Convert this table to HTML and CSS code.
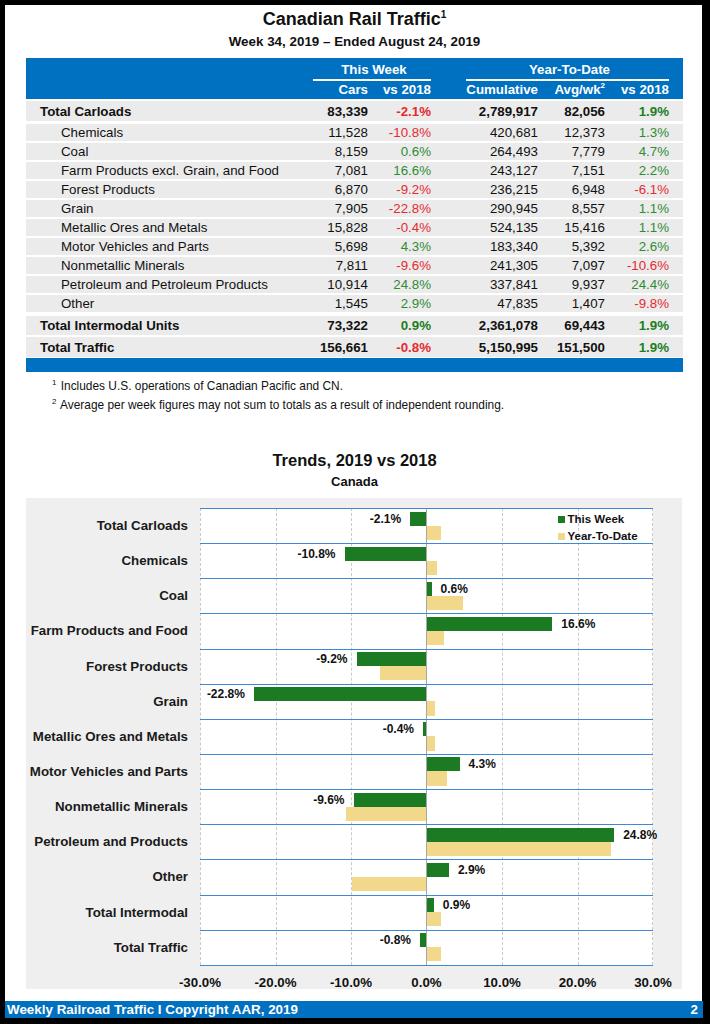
FILE: index.html
```html
<!DOCTYPE html>
<html>
<head>
<meta charset="utf-8">
<title>Canadian Rail Traffic</title>
<link rel="stylesheet" href="styles.css">
</head>
<body>
<div class="page">
  <h1 class="title">Canadian Rail Traffic<sup>1</sup></h1>
  <div class="subtitle">Week 34, 2019 – Ended August 24, 2019</div>

  <table class="traffic">
    <colgroup>
      <col class="c-label"><col class="c-cars"><col class="c-pct"><col class="c-gap"><col class="c-cum"><col class="c-avg"><col class="c-pct2"><col class="c-end">
    </colgroup>
    <thead>
      <tr class="h1">
        <td></td>
        <td colspan="2"><div class="grp grp-week">This Week</div></td>
        <td></td>
        <td colspan="3"><div class="grp grp-ytd">Year-To-Date</div></td>
        <td></td>
      </tr>
      <tr class="h2">
        <td></td>
        <td class="num">Cars</td>
        <td class="num">vs 2018</td>
        <td></td>
        <td class="num">Cumulative</td>
        <td class="num">Avg/wk<sup>2</sup></td>
        <td class="num">vs 2018</td>
        <td></td>
      </tr>
    </thead>
    <tbody>
      <tr class="total first"><td class="lbl">Total Carloads</td><td class="num">83,339</td><td class="num neg">-2.1%</td><td></td><td class="num">2,789,917</td><td class="num">82,056</td><td class="num pos">1.9%</td><td></td></tr>
      <tr class="sub first-sub"><td class="lbl">Chemicals</td><td class="num">11,528</td><td class="num neg">-10.8%</td><td></td><td class="num">420,681</td><td class="num">12,373</td><td class="num pos">1.3%</td><td></td></tr>
      <tr class="sub"><td class="lbl">Coal</td><td class="num">8,159</td><td class="num pos">0.6%</td><td></td><td class="num">264,493</td><td class="num">7,779</td><td class="num pos">4.7%</td><td></td></tr>
      <tr class="sub"><td class="lbl">Farm Products excl. Grain, and Food</td><td class="num">7,081</td><td class="num pos">16.6%</td><td></td><td class="num">243,127</td><td class="num">7,151</td><td class="num pos">2.2%</td><td></td></tr>
      <tr class="sub"><td class="lbl">Forest Products</td><td class="num">6,870</td><td class="num neg">-9.2%</td><td></td><td class="num">236,215</td><td class="num">6,948</td><td class="num neg">-6.1%</td><td></td></tr>
      <tr class="sub"><td class="lbl">Grain</td><td class="num">7,905</td><td class="num neg">-22.8%</td><td></td><td class="num">290,945</td><td class="num">8,557</td><td class="num pos">1.1%</td><td></td></tr>
      <tr class="sub"><td class="lbl">Metallic Ores and Metals</td><td class="num">15,828</td><td class="num neg">-0.4%</td><td></td><td class="num">524,135</td><td class="num">15,416</td><td class="num pos">1.1%</td><td></td></tr>
      <tr class="sub"><td class="lbl">Motor Vehicles and Parts</td><td class="num">5,698</td><td class="num pos">4.3%</td><td></td><td class="num">183,340</td><td class="num">5,392</td><td class="num pos">2.6%</td><td></td></tr>
      <tr class="sub"><td class="lbl">Nonmetallic Minerals</td><td class="num">7,811</td><td class="num neg">-9.6%</td><td></td><td class="num">241,305</td><td class="num">7,097</td><td class="num neg">-10.6%</td><td></td></tr>
      <tr class="sub"><td class="lbl">Petroleum and Petroleum Products</td><td class="num">10,914</td><td class="num pos">24.8%</td><td></td><td class="num">337,841</td><td class="num">9,937</td><td class="num pos">24.4%</td><td></td></tr>
      <tr class="sub"><td class="lbl">Other</td><td class="num">1,545</td><td class="num pos">2.9%</td><td></td><td class="num">47,835</td><td class="num">1,407</td><td class="num neg">-9.8%</td><td></td></tr>
      <tr class="total after-sub"><td class="lbl">Total Intermodal Units</td><td class="num">73,322</td><td class="num pos">0.9%</td><td></td><td class="num">2,361,078</td><td class="num">69,443</td><td class="num pos">1.9%</td><td></td></tr>
      <tr class="total last"><td class="lbl">Total Traffic</td><td class="num">156,661</td><td class="num neg">-0.8%</td><td></td><td class="num">5,150,995</td><td class="num">151,500</td><td class="num pos">1.9%</td><td></td></tr>
    </tbody>
    <tfoot>
      <tr><td colspan="8"></td></tr>
    </tfoot>
  </table>

  <div class="notes">
    <div><sup>1</sup> Includes U.S. operations of Canadian Pacific and CN.</div>
    <div><sup>2</sup> Average per week figures may not sum to totals as a result of independent rounding.</div>
  </div>

  <h2 class="chart-title">Trends, 2019 vs 2018</h2>
  <div class="chart-sub">Canada</div>

  <div class="chart">
    <div class="cats">
      <div>Total Carloads</div>
      <div>Chemicals</div>
      <div>Coal</div>
      <div>Farm Products and Food</div>
      <div>Forest Products</div>
      <div>Grain</div>
      <div>Metallic Ores and Metals</div>
      <div>Motor Vehicles and Parts</div>
      <div>Nonmetallic Minerals</div>
      <div>Petroleum and Products</div>
      <div>Other</div>
      <div>Total Intermodal</div>
      <div>Total Traffic</div>
    </div>
    <div class="plotcol">
      <div class="plot">
        <i class="vgrid" style="left:0px"></i>
        <i class="vgrid" style="left:75.5px"></i>
        <i class="vgrid" style="left:151px"></i>
        <i class="vgrid" style="left:302px"></i>
        <i class="vgrid" style="left:377.5px"></i>
        <i class="vgrid" style="left:452px"></i>

        <div class="row"><div class="nh"><div class="ln g"><span class="val">-2.1%</span><b class="bar gb" style="width:15.9px"></b></div><div class="ln y"></div></div><div class="ph"><div class="ln g"></div><div class="ln y"><b class="bar yb" style="width:14.3px"></b></div></div></div>
        <div class="row"><div class="nh"><div class="ln g"><span class="val">-10.8%</span><b class="bar gb" style="width:81.5px"></b></div><div class="ln y"></div></div><div class="ph"><div class="ln g"></div><div class="ln y"><b class="bar yb" style="width:9.8px"></b></div></div></div>
        <div class="row"><div class="nh"><div class="ln g"></div><div class="ln y"></div></div><div class="ph"><div class="ln g"><b class="bar gb" style="width:4.5px"></b><span class="val">0.6%</span></div><div class="ln y"><b class="bar yb" style="width:35.5px"></b></div></div></div>
        <div class="row"><div class="nh"><div class="ln g"></div><div class="ln y"></div></div><div class="ph"><div class="ln g"><b class="bar gb" style="width:125.3px"></b><span class="val">16.6%</span></div><div class="ln y"><b class="bar yb" style="width:16.6px"></b></div></div></div>
        <div class="row"><div class="nh"><div class="ln g"><span class="val">-9.2%</span><b class="bar gb" style="width:69.5px"></b></div><div class="ln y"><b class="bar yb" style="width:46.1px"></b></div></div><div class="ph"><div class="ln g"></div><div class="ln y"></div></div></div>
        <div class="row"><div class="nh"><div class="ln g"><span class="val">-22.8%</span><b class="bar gb" style="width:172.1px"></b></div><div class="ln y"></div></div><div class="ph"><div class="ln g"></div><div class="ln y"><b class="bar yb" style="width:8.3px"></b></div></div></div>
        <div class="row"><div class="nh"><div class="ln g"><span class="val">-0.4%</span><b class="bar gb" style="width:3px"></b></div><div class="ln y"></div></div><div class="ph"><div class="ln g"></div><div class="ln y"><b class="bar yb" style="width:8.3px"></b></div></div></div>
        <div class="row"><div class="nh"><div class="ln g"></div><div class="ln y"></div></div><div class="ph"><div class="ln g"><b class="bar gb" style="width:32.5px"></b><span class="val">4.3%</span></div><div class="ln y"><b class="bar yb" style="width:19.6px"></b></div></div></div>
        <div class="row"><div class="nh"><div class="ln g"><span class="val">-9.6%</span><b class="bar gb" style="width:72.5px"></b></div><div class="ln y"><b class="bar yb" style="width:80px"></b></div></div><div class="ph"><div class="ln g"></div><div class="ln y"></div></div></div>
        <div class="row"><div class="nh"><div class="ln g"></div><div class="ln y"></div></div><div class="ph"><div class="ln g"><b class="bar gb" style="width:187.2px"></b><span class="val">24.8%</span></div><div class="ln y"><b class="bar yb" style="width:184.2px"></b></div></div></div>
        <div class="row"><div class="nh"><div class="ln g"></div><div class="ln y"><b class="bar yb" style="width:74px"></b></div></div><div class="ph"><div class="ln g"><b class="bar gb" style="width:21.9px"></b><span class="val">2.9%</span></div><div class="ln y"></div></div></div>
        <div class="row"><div class="nh"><div class="ln g"></div><div class="ln y"></div></div><div class="ph"><div class="ln g"><b class="bar gb" style="width:6.8px"></b><span class="val">0.9%</span></div><div class="ln y"><b class="bar yb" style="width:14.3px"></b></div></div></div>
        <div class="row"><div class="nh"><div class="ln g"><span class="val">-0.8%</span><b class="bar gb" style="width:6px"></b></div><div class="ln y"></div></div><div class="ph"><div class="ln g"></div><div class="ln y"><b class="bar yb" style="width:14.3px"></b></div></div></div>

        <div class="legend">
          <div><span class="sw sw-g"></span>This Week</div>
          <div><span class="sw sw-y"></span>Year-To-Date</div>
        </div>
      </div>
      <div class="axis">
        <span>-30.0%</span><span>-20.0%</span><span>-10.0%</span><span>0.0%</span><span>10.0%</span><span>20.0%</span><span>30.0%</span>
      </div>
    </div>
  </div>
</div>
<div class="footer"><span>Weekly Railroad Traffic I Copyright AAR, 2019</span><span>2</span></div>
</body>
</html>
```
FILE: styles.css
```css
* { box-sizing: border-box; }
html, body { margin: 0; padding: 0; }
body {
  background: #000;
  width: 710px;
  height: 1024px;
  overflow: hidden;
  font-family: "Liberation Sans", Arial, Helvetica, sans-serif;
  color: #111;
}
.page {
  margin: 5px 0 0 5px;
  width: 697px;
  height: 996px;
  background: #fff;
  padding: 4px 19px 0 21px;
}
.title {
  margin: 0;
  font-size: 18px;
  font-weight: bold;
  line-height: 20px;
  text-align: center;
}
.title sup {
  font-size: 10px;
  line-height: 0;
  vertical-align: 7px;
}
.subtitle {
  margin-top: 5px;
  font-size: 13.4px;
  font-weight: bold;
  line-height: 16px;
  text-align: center;
}

/* table */
.traffic {
  margin-top: 8px;
  width: 657px;
  table-layout: fixed;
  border-collapse: separate;
  border-spacing: 0;
  font-size: 13.3px;
}
.c-label { width: 284px; }
.c-cars { width: 58px; }
.c-pct { width: 63px; }
.c-gap { width: 35px; }
.c-cum { width: 72px; }
.c-avg { width: 67px; }
.c-pct2 { width: 64px; }
.c-end { width: 14px; }
.traffic td { padding: 0; white-space: nowrap; vertical-align: middle; }
.traffic thead td {
  background: #0070c0;
  color: #fff;
  font-weight: bold;
}
.traffic .h1 td { height: 23px; vertical-align: bottom; }
.traffic .h2 td { height: 18px; line-height: 16px; }
.grp {
  line-height: 19px;
  border-bottom: 2px solid #fff;
  text-align: center;
}
.grp-week { margin: 0 -4px 0 3px; }
.grp-ytd { margin: 0 -4px 0 0; }
.traffic thead sup { font-size: 8px; line-height: 0; vertical-align: 6px; }
.num { text-align: right; }
.traffic tbody td {
  background: #ebebeb;
  line-height: 15px;
  border-top: 2px solid #fff;
}
.traffic tbody .total td { height: 21px; font-weight: bold; }
.traffic tbody .first td { height: 22px; padding-top: 1px; }
.traffic tbody .sub td { height: 19px; }
.traffic tbody .first-sub td { border-top-width: 3px; height: 20px; }
.traffic tbody .after-sub td { border-top-width: 4px; height: 23px; }
.traffic tbody .last td { height: 22px; }
.traffic .total .lbl { padding-left: 14px; }
.traffic .sub .lbl { padding-left: 35px; }
.neg { color: #e52a30; }
.pos { color: #2e8c34; }
.total .pos { color: #1d7f25; }
.traffic tfoot td {
  height: 15px;
  background: #0070c0;
  border-top: 1px solid #fff;
  padding: 0;
}

/* footnotes */
.notes {
  margin-top: 5px;
  padding-left: 26px;
  font-size: 11.9px;
  line-height: 19px;
}
.notes sup { font-size: 8px; line-height: 0; vertical-align: 5px; margin-right: 1px; }

/* chart */
.chart-title {
  margin: 35px 0 0;
  font-size: 16.5px;
  font-weight: bold;
  line-height: 20px;
  text-align: center;
}
.chart-sub {
  margin-top: 4px;
  font-size: 13px;
  font-weight: bold;
  line-height: 16px;
  text-align: center;
}
.chart {
  margin-top: 8px;
  width: 656px;
  background: #efefef;
  display: flex;
  padding: 10px 29px 0 0;
  height: 491px;
}
.cats {
  width: 174px;
  padding-right: 12px;
  font-size: 13.3px;
  font-weight: bold;
  color: #1a1a1a;
}
.cats div {
  height: 35.15px;
  display: flex;
  align-items: center;
  justify-content: flex-end;
  white-space: nowrap;
}
.plotcol { width: 453px; }
.plot {
  position: relative;
  background: #fff;
  border-bottom: 1.5px solid #3d89d6;
}
.vgrid {
  position: absolute;
  top: 0;
  bottom: 0;
  width: 0;
  border-left: 1px dashed #c9c9c9;
  z-index: 0;
}
.row {
  position: relative;
  z-index: 1;
  display: flex;
  height: 35.15px;
  border-top: 1.5px solid #3d89d6;
}
.nh { width: 226px; padding-top: 2.5px; }
.ph { width: 227px; padding-top: 2.5px; border-left: 1px solid #a8a8a8; }
.ln { display: flex; align-items: center; height: 14px; }
.ln.y { height: 14.3px; }
.nh .ln { justify-content: flex-end; }
.bar { display: block; height: 100%; flex: none; }
.gb { background: #1b7a22; }
.yb { background: #f1d88b; }
.val {
  font-size: 12px;
  font-weight: bold;
  margin: 0 9px;
  white-space: nowrap;
  color: #111;
}
.legend {
  position: absolute;
  left: 358px;
  top: 2.5px;
  z-index: 2;
  font-size: 11.5px;
  font-weight: bold;
  line-height: 17px;
  white-space: nowrap;
}
.sw {
  display: inline-block;
  width: 7px;
  height: 7px;
  margin-right: 2.5px;
  vertical-align: 0;
}
.sw-g { background: #1b7a22; }
.sw-y { background: #f1d88b; }
.axis {
  display: flex;
  margin: 0 -37.75px;
  padding-top: 9px;
}
.axis span {
  width: 75.5px;
  text-align: center;
  font-size: 13.3px;
  font-weight: bold;
  line-height: 16px;
}

/* footer */
.footer {
  margin-left: 5px;
  width: 698px;
  height: 17px;
  background: #0070c0;
  color: #fff;
  font-size: 13.4px;
  font-weight: bold;
  line-height: 17px;
  display: flex;
  justify-content: space-between;
  padding: 0 5px 0 2px;
}
```
